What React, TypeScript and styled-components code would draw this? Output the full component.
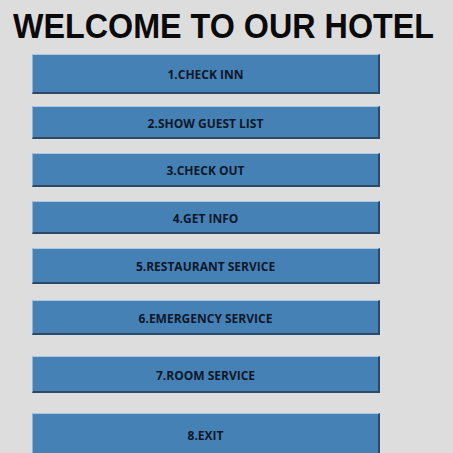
import React from "react";
import styled, { createGlobalStyle } from "styled-components";

const Global = createGlobalStyle`
  html, body {
    margin: 0;
    padding: 0;
    background: #dddddd;
    width: 453px;
    height: 453px;
    overflow: hidden;
  }
`;

const Page = styled.div`
  width: 453px;
  height: 453px;
  background: #dddddd;
  display: flex;
  flex-direction: column;
  overflow: hidden;
`;

const Title = styled.h1`
  flex: none;
  margin: 0;
  padding: 3.7px 0 0 13px;
  height: 48px;
  box-sizing: border-box;
  font-family: "Liberation Sans", Arial, sans-serif;
  font-weight: bold;
  font-size: 32.3px;
  line-height: 40px;
  color: #0a0a0a;
  white-space: nowrap;
  transform: scaleY(1.08);
  transform-origin: top left;
`;

const Menu = styled.div`
  flex: none;
  display: flex;
  flex-direction: column;
  padding-left: 32px;
`;

const MenuButton = styled.button<{ $h: number; $gap: number }>`
  width: 348px;
  height: ${(p) => p.$h}px;
  margin-top: ${(p) => p.$gap}px;
  box-sizing: border-box;
  flex: none;
  background: #4681b5;
  border-style: solid;
  border-width: 1px 2px 2px 1px;
  border-color: #a9c8e4 #2c4a68 #2c4a68 #8fb3d6;
  padding: 2px 0 0 0;
  display: flex;
  align-items: center;
  justify-content: center;
  font-family: "Open Sans", sans-serif;
  font-weight: bold;
  font-size: 12px;
  color: #0c1829;
  cursor: pointer;
`;

const items: { label: string; h: number; gap: number }[] = [
  { label: "1.CHECK INN", h: 40, gap: 6 },
  { label: "2.SHOW GUEST LIST", h: 33, gap: 12 },
  { label: "3.CHECK OUT", h: 34, gap: 14 },
  { label: "4.GET INFO", h: 33, gap: 14 },
  { label: "5.RESTAURANT SERVICE", h: 36, gap: 14 },
  { label: "6.EMERGENCY SERVICE", h: 35, gap: 16 },
  { label: "7.ROOM SERVICE", h: 37, gap: 21 },
  { label: "8.EXIT", h: 44, gap: 20 },
];

export default function App() {
  return (
    <>
      <Global />
      <Page>
        <Title>WELCOME TO OUR HOTEL</Title>
        <Menu>
          {items.map((it) => (
            <MenuButton key={it.label} $h={it.h} $gap={it.gap}>
              {it.label}
            </MenuButton>
          ))}
        </Menu>
      </Page>
    </>
  );
}
